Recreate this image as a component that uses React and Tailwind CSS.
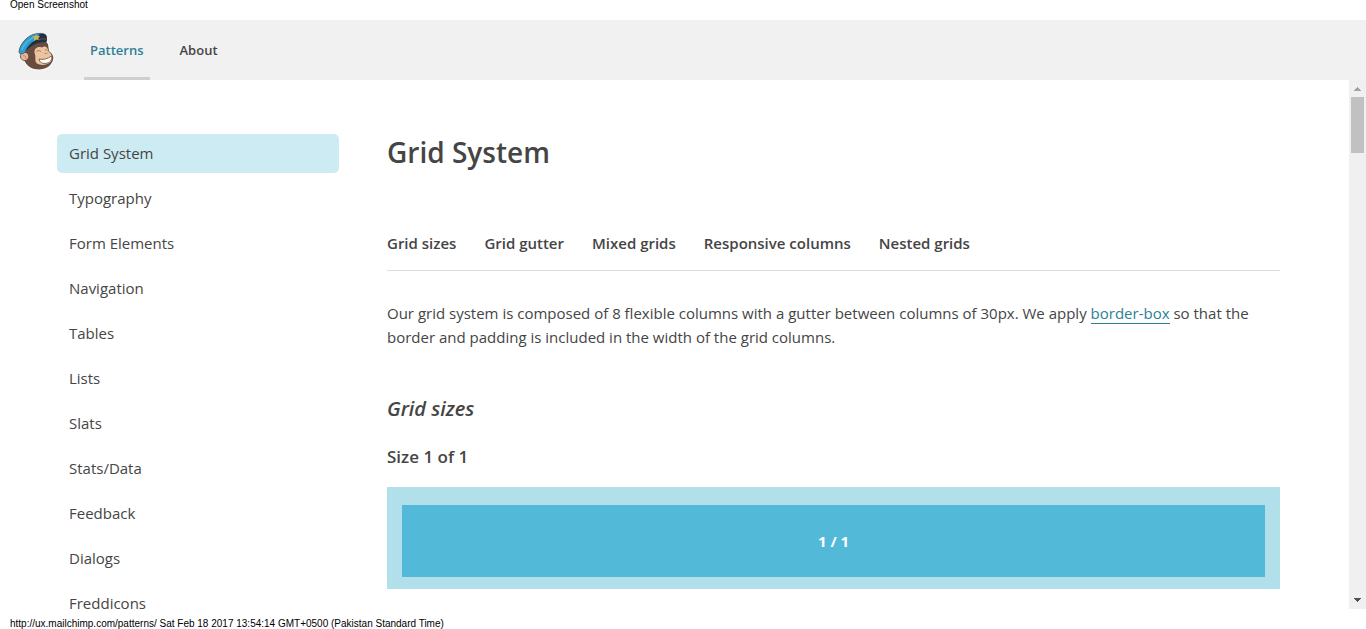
const patterns = [
  'Grid System', 'Typography', 'Form Elements', 'Navigation', 'Tables', 'Lists',
  'Slats', 'Stats/Data', 'Feedback', 'Dialogs', 'Freddicons',
];

const sections = ['Grid sizes', 'Grid gutter', 'Mixed grids', 'Responsive columns', 'Nested grids'];

function Logo() {
  return (
    <svg viewBox="0 0 48 48" className="size-12" role="img" aria-label="MailChimp">
      <path d="M12 23L18 17C24 12 32 11 36 16L37 23C41 26 42 29 41 32C39 38 34 41.500 27 41.500C20 41.500 15 38 12.500 33Z" fill="#6a4b40" stroke="#fff" strokeWidth="2" />
      <path d="M12 23L18 17C24 12 32 11 36 16L37 23C41 26 42 29 41 32C39 38 34 41.500 27 41.500C20 41.500 15 38 12.500 33Z" fill="#6a4b40" />
      <path d="M22.500 25C22 20.500 25.500 18 30 19.500C32.500 17 36 19 36.500 23.500C40 26 41 30 39 33.500C36 37 29 38 25 35.500C22 33 24.500 29 22.500 25Z" fill="#ecc49f" />
      <path d="M15.500 25.500C12 22.500 7.500 25 8.500 29C9.500 33 14 33.500 16 31C17 29 17 27 15.500 25.500Z" fill="#e6b897" stroke="#6a4b40" strokeWidth=".9" />
      <path d="M10.500 28Q14 26.500 14 31" fill="none" stroke="#b98771" strokeWidth=".9" />
      <path d="M24.500 23.500Q27 21.500 29 23.500M33 22Q34.500 21 35.500 22.500" fill="none" stroke="#a07358" strokeWidth=".9" />
      <path d="M32.500 25Q35 26.500 35.500 25" fill="none" stroke="#9f735c" strokeWidth=".8" />
      <path d="M27 31C31 32 35.500 31 39.500 28C40.500 32 38 35 33 35.500C29.500 35.500 27.500 34 27 31Z" fill="#fff" stroke="#805b4b" strokeWidth=".9" />
      <path d="M7 24.500C7 18 13 10 20 7C25 5 32 4.500 34 7.500L34.500 13C29 13 22 16 16 21L11.500 25.500Q8 27 7 24.500Z" fill="#2c9fd0" stroke="#4b5965" strokeWidth=".9" />
      <path d="M9.500 22Q13 14 21 9.500" fill="none" stroke="#46b3df" strokeWidth="2" />
      <path d="M13 23.500C16 17 21 13 26 11L27 6.500C31 5 35 6 34.800 10L34.500 14.500C27 13 20 17 13 23.500Z" fill="#26303c" />
      <path d="M26 12Q30 10 34 11" fill="none" stroke="#5b6670" strokeWidth=".8" />
      <path d="M20 8L22.500 8.500L24 6.500L25.500 8L28 8L26.500 10L26.500 12L24 11.500L22 13L22 10.500Z" fill="#c9b458" />
    </svg>
  );
}

function Scrollbar() {
  return (
    <div aria-hidden="true" className="flex w-[17px] shrink-0 flex-col items-center bg-[#f0f0f0]">
      <div className="flex h-[17px] items-center">
        <svg viewBox="0 0 7 4" shapeRendering="crispEdges" className="h-1 w-[7px] fill-[#a3a3a3]"><path d="M3 0h1v1h1v1h1v1h1v1H0V3h1V2h1V1h1z" /></svg>
      </div>
      <div className="h-14 w-[13px] bg-[#c1c1c1]" />
      <div className="mt-auto flex h-[18px] items-center">
        <svg viewBox="0 0 7 4" shapeRendering="crispEdges" className="h-1 w-[7px] fill-[#505050]"><path d="M0 0h7v1H6v1H5v1H4v1H3V3H2V2H1V1H0z" /></svg>
      </div>
    </div>
  );
}

export default function App() {
  return (
    <div className="flex h-screen flex-col overflow-hidden bg-white font-['Open_Sans',sans-serif] text-[15px] leading-6 text-[#454545]">
      <div className="h-5 shrink-0 px-2.5 font-['Liberation_Sans',sans-serif] text-[10px] leading-[10px] text-black">Open Screenshot</div>

      <header className="flex h-15 shrink-0 items-stretch bg-[#f1f1f1] pl-3">
        <a href="#home" className="mt-2 mr-6"><Logo /></a>
        <nav aria-label="Main" className="flex gap-6 text-[13px] font-semibold">
          <a href="#patterns" aria-current="page" className="flex items-center border-b-3 border-[#cfcfcf] px-1.5 pt-[3px] text-[#2c7f96]">Patterns</a>
          <a href="#about" className="flex items-center px-1.5">About</a>
        </nav>
      </header>

      <div className="flex min-h-0 flex-1">
        <div className="flex min-w-0 flex-1 gap-12 overflow-hidden pt-[54px] pr-[69px] pl-[57px]">
          <nav aria-label="Patterns" className="w-[282px] shrink-0">
            <ul className="flex flex-col gap-1.5">
              {patterns.map((name, i) => (
                <li key={name}>
                  <a href={'#' + name} className={`block h-[39px] rounded-[5px] px-3 leading-[39px] ${i === 0 ? 'bg-[#cdebf2]' : ''}`}>{name}</a>
                </li>
              ))}
            </ul>
          </nav>

          <main className="min-w-0 flex-1">
            <h1 className="text-[28px] leading-9 font-semibold">Grid System</h1>
            <nav aria-label="Sections" className="mt-[61px] flex gap-7 border-b border-[#dddddd] pb-[15px] font-semibold">
              {sections.map((name) => <a key={name} href={'#' + name}>{name}</a>)}
            </nav>
            <p className="mt-[30px]">
              Our grid system is composed of 8 flexible columns with a gutter between columns of 30px. We apply{' '}
              <a href="#border-box" className="border-b border-[#2c7f96] text-[#2c7f96]">border-box</a>{' '}
              so that the border and padding is included in the width of the grid columns.
            </p>
            <h2 className="mt-12 text-[20px] leading-6 font-semibold italic">Grid sizes</h2>
            <h3 className="mt-6 text-[17px] leading-6 font-semibold">Size 1 of 1</h3>
            <div className="mt-[18px] bg-[#b1dfea] px-[15px] pt-[18px] pb-3">
              <div className="bg-[#52b9d8] py-6 text-center font-bold text-white">1 / 1</div>
            </div>
          </main>
        </div>
        <Scrollbar />
      </div>

      <footer className="h-5 shrink-0 px-2.5 pt-[9px] font-['Liberation_Sans',sans-serif] text-[10px] leading-[11px] text-black">
        http://ux.mailchimp.com/patterns/ Sat Feb 18 2017 13:54:14 GMT+0500 (Pakistan Standard Time)
      </footer>
    </div>
  );
}
